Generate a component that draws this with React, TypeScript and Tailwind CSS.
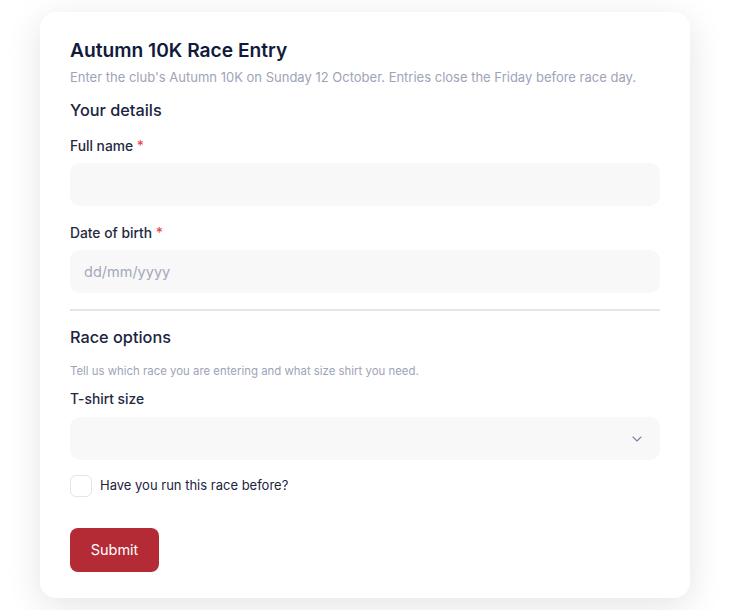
import { ChevronDown } from 'lucide-react';

export default function App() {
  return (
    <div className="min-h-screen bg-white py-3 flex justify-center font-['Inter',sans-serif]">
      <div className="w-[650px] rounded-2xl bg-white shadow-[0_8px_36px_rgba(0,0,0,0.11)] px-[30px] pt-6 pb-[26px]">
        <h1 className="text-[19.2px] leading-7 font-semibold text-[#111a3a]">Autumn 10K Race Entry</h1>
        <p className="mt-[3px] text-[13px] leading-5 text-[#9ea3b8]">
          Enter the club's Autumn 10K on Sunday 12 October. Entries close the Friday before race day.
        </p>

        <h2 className="mt-[11px] text-[16.3px] leading-6 font-medium text-[#1b2440]">Your details</h2>

        <label className="block mt-[14px] text-[13.8px] leading-5 font-medium text-[#1f2940]">
          Full name <span className="text-[#e5484d]">*</span>
        </label>
        <input
          type="text"
          className="mt-[7px] block w-full h-[43px] rounded-[10px] bg-[#f8f8f8] px-[14px] text-sm outline-none"
        />

        <label className="block mt-[17px] text-[13.8px] leading-5 font-medium text-[#1f2940]">
          Date of birth <span className="text-[#e5484d]">*</span>
        </label>
        <input
          type="text"
          placeholder="dd/mm/yyyy"
          className="mt-[7px] block w-full h-[43px] rounded-[10px] bg-[#f8f8f8] px-[14px] text-[14.5px] outline-none placeholder:text-[#a3a8bb]"
        />

        <div className="mt-4 h-[2px] bg-[#e4e4e9]" />

        <h2 className="mt-[14px] text-[16.3px] leading-6 font-medium text-[#1b2440]">Race options</h2>
        <p className="mt-[14px] text-[11.4px] leading-4 text-[#9ea3b8]">
          Tell us which race you are entering and what size shirt you need.
        </p>

        <label className="block mt-[10px] text-[13.8px] leading-5 font-medium text-[#1f2940]">T-shirt size</label>
        <div className="mt-2 flex items-center justify-end w-full h-[43px] rounded-[10px] bg-[#f8f8f8] pr-[15px]">
          <ChevronDown size={16} strokeWidth={1.6} className="text-[#7c819b]" />
        </div>

        <div className="mt-[15px] flex items-center gap-2">
          <span className="w-[22px] h-[22px] rounded-md border border-[#e3e5ec] bg-white" />
          <span className="text-[13px] text-[#1b2440]">Have you run this race before?</span>
        </div>

        <button className="mt-[31px] h-[44px] w-[89px] rounded-lg bg-[#b42b36] text-white text-[14.5px] font-normal">
          Submit
        </button>
      </div>
    </div>
  );
}
